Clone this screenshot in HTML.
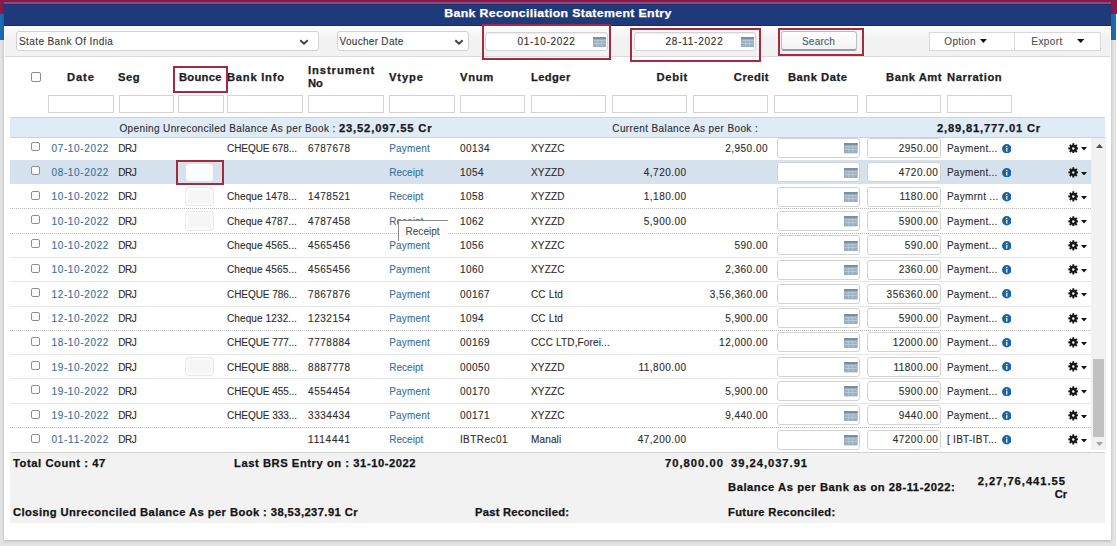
<!DOCTYPE html>
<html><head><meta charset="utf-8"><style>
html,body{margin:0;padding:0;width:1117px;height:546px;overflow:hidden;background:#e4e4e4;}
body{position:relative;font-family:"Liberation Sans", sans-serif;}
div,svg{position:absolute;}
.t{white-space:nowrap;}
</style></head><body>
<div style="left:0.00px;top:0.00px;width:1117.00px;height:2.20px;background:#861848"></div>
<div style="left:0.00px;top:0.00px;width:5.00px;height:14.00px;background:#8a1a48"></div>
<div style="left:1110.00px;top:0.00px;width:7.00px;height:14.00px;background:#8a1a48"></div>
<div style="left:0.00px;top:14.00px;width:4.00px;height:26.00px;background:#1b6cb0"></div>
<div style="left:1110.00px;top:14.00px;width:6.00px;height:26.00px;background:#1b6cb0"></div>
<div style="left:1116.00px;top:14.00px;width:1.00px;height:532.00px;background:#ffffff"></div>
<div style="left:4.00px;top:3.50px;width:1107.00px;height:536.50px;background:#fff;box-shadow:0 1px 3px rgba(0,0,0,0.22)"></div>
<div style="left:4.00px;top:2.20px;width:1107.00px;height:1.60px;background:#8c4a82"></div>
<div style="left:4.00px;top:3.80px;width:1107.00px;height:22.20px;background:#1f3a7a;border-bottom:1px solid #1a2c5a;border-top:1px solid #2a2f66;box-sizing:border-box"></div>
<div class="t" style="left:258.17px;width:600px;text-align:center;top:7.69px;font-size:11px;line-height:11px;font-weight:bold;-webkit-text-stroke:0.25px #fff;color:#fff;letter-spacing:0.298px;transform:scaleX(1.12);transform-origin:50% 0;">Bank Reconciliation Statement Entry</div>
<div style="left:5.00px;top:26.00px;width:1105.00px;height:30.00px;background:linear-gradient(#fdfdfd,#f2f2f2 40%,#f2f2f2)"></div>
<div style="left:5.00px;top:56.00px;width:1105.00px;height:1.00px;background:#d9d9d9"></div>
<div style="left:16.00px;top:31.00px;width:303.00px;height:20.00px;background:#fff;border:1px solid #d3d3d3;border-radius:3px;box-sizing:border-box"></div>
<div class="t" style="left:19.00px;top:37.14px;font-size:10px;line-height:10px;-webkit-text-stroke:0.12px #3a3a3a;color:#3a3a3a;letter-spacing:0.399px;">State Bank Of India</div>
<svg style="position:absolute;left:299px;top:39.4px" width="10" height="6.5" viewBox="0 0 10 6.5"><path d="M1.3 1.2 L5 4.7 L8.7 1.2" stroke="#404040" stroke-width="1.9" fill="none"/></svg>
<div style="left:336.50px;top:31.00px;width:132.00px;height:20.00px;background:#fff;border:1px solid #d3d3d3;border-radius:3px;box-sizing:border-box"></div>
<div class="t" style="left:339.50px;top:37.14px;font-size:10px;line-height:10px;-webkit-text-stroke:0.12px #3a3a3a;color:#3a3a3a;letter-spacing:0.299px;">Voucher Date</div>
<svg style="position:absolute;left:454px;top:39.4px" width="10" height="6.5" viewBox="0 0 10 6.5"><path d="M1.3 1.2 L5 4.7 L8.7 1.2" stroke="#404040" stroke-width="1.9" fill="none"/></svg>
<div style="left:485.00px;top:31.50px;width:123.00px;height:19.50px;background:#fff;border:1px solid #d4d4d4;border-radius:3px;box-sizing:border-box;box-shadow:inset 0 1px 1px rgba(0,0,0,0.07)"></div>
<div class="t" style="left:517.50px;top:36.53px;font-size:10px;line-height:10px;-webkit-text-stroke:0.12px #2e2e2e;color:#2e2e2e;letter-spacing:0.672px;">01-10-2022</div>
<svg style="position:absolute;left:592.50px;top:36.80px" width="13.5" height="10.2" viewBox="0 0 14 11" preserveAspectRatio="none"><rect x="0" y="0" width="14" height="11" fill="#9cafc1"/><rect x="0" y="0" width="14" height="2.2" fill="#7a8ea2"/><rect x="1" y="3.6" width="12" height="0.8" fill="#c4d0dc"/><rect x="1" y="6.5" width="12" height="0.8" fill="#c4d0dc"/><rect x="4.6" y="3" width="0.8" height="7" fill="#bfccd8"/><rect x="8.6" y="3" width="0.8" height="7" fill="#bfccd8"/></svg>
<div style="left:633.50px;top:31.50px;width:122.50px;height:19.50px;background:#fff;border:1px solid #d4d4d4;border-radius:3px;box-sizing:border-box;box-shadow:inset 0 1px 1px rgba(0,0,0,0.07)"></div>
<div class="t" style="left:665.50px;top:36.53px;font-size:10px;line-height:10px;-webkit-text-stroke:0.12px #2e2e2e;color:#2e2e2e;letter-spacing:0.753px;">28-11-2022</div>
<svg style="position:absolute;left:740.50px;top:36.80px" width="13.5" height="10.2" viewBox="0 0 14 11" preserveAspectRatio="none"><rect x="0" y="0" width="14" height="11" fill="#9cafc1"/><rect x="0" y="0" width="14" height="2.2" fill="#7a8ea2"/><rect x="1" y="3.6" width="12" height="0.8" fill="#c4d0dc"/><rect x="1" y="6.5" width="12" height="0.8" fill="#c4d0dc"/><rect x="4.6" y="3" width="0.8" height="7" fill="#bfccd8"/><rect x="8.6" y="3" width="0.8" height="7" fill="#bfccd8"/></svg>
<div style="left:482.20px;top:24.20px;width:129.30px;height:35.60px;border:2px solid #a52a40;box-sizing:border-box"></div>
<div style="left:630.30px;top:27.80px;width:130.70px;height:34.70px;border:2px solid #a52a40;box-sizing:border-box"></div>
<div style="left:781.00px;top:31.40px;width:76.00px;height:19.60px;background:linear-gradient(#fff,#f3f3f3);border:1px solid #bdbdbd;border-bottom:2px solid #9c9c9c;border-radius:3px;box-sizing:border-box"></div>
<div class="t" style="left:802.00px;top:36.94px;font-size:10px;line-height:10px;-webkit-text-stroke:0.12px #4d5d6b;color:#4d5d6b;letter-spacing:0.202px;">Search</div>
<div style="left:778.00px;top:27.80px;width:85.50px;height:28.70px;border:2px solid #a52a40;box-sizing:border-box"></div>
<div style="left:928.50px;top:31.50px;width:172.00px;height:19.30px;background:#fff;border:1px solid #d9d9d9;box-sizing:border-box"></div>
<div style="left:1014.20px;top:31.50px;width:1.00px;height:19.30px;background:#d9d9d9"></div>
<div class="t" style="left:944.30px;top:37.14px;font-size:10px;line-height:10px;-webkit-text-stroke:0.12px #505050;color:#505050;letter-spacing:0.366px;">Option</div>
<div class="t" style="left:1031.30px;top:37.14px;font-size:10px;line-height:10px;-webkit-text-stroke:0.12px #505050;color:#505050;letter-spacing:0.439px;">Export</div>
<svg style="position:absolute;left:980.20px;top:38.80px" width="6.8" height="4" viewBox="0 0 6.8 4"><path d="M0 0 L6.8 0 L3.4 4 Z" fill="#111"/></svg>
<svg style="position:absolute;left:1077.30px;top:38.80px" width="7.4" height="4" viewBox="0 0 7.4 4"><path d="M0 0 L7.4 0 L3.7 4 Z" fill="#111"/></svg>
<div style="left:31.00px;top:71.50px;width:10.00px;height:10.00px;border:1px solid #8c8c8c;border-radius:2px;box-sizing:border-box;background:#fff"></div>
<div class="t" style="left:66.90px;top:72.73px;font-size:10px;line-height:10px;font-weight:bold;-webkit-text-stroke:0.25px #1e1e1e;color:#1e1e1e;letter-spacing:0.805px;transform:scaleX(1.12);transform-origin:0 0;">Date</div>
<div class="t" style="left:118.30px;top:72.73px;font-size:10px;line-height:10px;font-weight:bold;-webkit-text-stroke:0.25px #1e1e1e;color:#1e1e1e;letter-spacing:0.514px;transform:scaleX(1.12);transform-origin:0 0;">Seg</div>
<div class="t" style="left:178.50px;top:72.73px;font-size:10px;line-height:10px;font-weight:bold;-webkit-text-stroke:0.25px #1e1e1e;color:#1e1e1e;letter-spacing:0.254px;transform:scaleX(1.12);transform-origin:0 0;">Bounce</div>
<div class="t" style="left:227.10px;top:72.73px;font-size:10px;line-height:10px;font-weight:bold;-webkit-text-stroke:0.25px #1e1e1e;color:#1e1e1e;letter-spacing:0.666px;transform:scaleX(1.12);transform-origin:0 0;">Bank Info</div>
<div class="t" style="left:308.10px;top:65.63px;font-size:10px;line-height:10px;font-weight:bold;-webkit-text-stroke:0.25px #1e1e1e;color:#1e1e1e;letter-spacing:0.826px;transform:scaleX(1.12);transform-origin:0 0;">Instrument</div>
<div class="t" style="left:308.10px;top:79.03px;font-size:10px;line-height:10px;font-weight:bold;-webkit-text-stroke:0.25px #1e1e1e;color:#1e1e1e;letter-spacing:-0.044px;transform:scaleX(1.12);transform-origin:0 0;">No</div>
<div class="t" style="left:388.90px;top:72.73px;font-size:10px;line-height:10px;font-weight:bold;-webkit-text-stroke:0.25px #1e1e1e;color:#1e1e1e;letter-spacing:0.802px;transform:scaleX(1.12);transform-origin:0 0;">Vtype</div>
<div class="t" style="left:459.90px;top:72.73px;font-size:10px;line-height:10px;font-weight:bold;-webkit-text-stroke:0.25px #1e1e1e;color:#1e1e1e;letter-spacing:0.649px;transform:scaleX(1.12);transform-origin:0 0;">Vnum</div>
<div class="t" style="left:531.00px;top:72.73px;font-size:10px;line-height:10px;font-weight:bold;-webkit-text-stroke:0.25px #1e1e1e;color:#1e1e1e;letter-spacing:0.348px;transform:scaleX(1.12);transform-origin:0 0;">Ledger</div>
<div class="t" style="left:87.98px;width:600px;text-align:right;top:72.73px;font-size:10px;line-height:10px;font-weight:bold;-webkit-text-stroke:0.25px #1e1e1e;color:#1e1e1e;letter-spacing:0.646px;transform:scaleX(1.12);transform-origin:100% 0;">Debit</div>
<div class="t" style="left:169.24px;width:600px;text-align:right;top:72.73px;font-size:10px;line-height:10px;font-weight:bold;-webkit-text-stroke:0.25px #1e1e1e;color:#1e1e1e;letter-spacing:0.414px;transform:scaleX(1.12);transform-origin:100% 0;">Credit</div>
<div class="t" style="left:787.50px;top:72.73px;font-size:10px;line-height:10px;font-weight:bold;-webkit-text-stroke:0.25px #1e1e1e;color:#1e1e1e;letter-spacing:0.460px;transform:scaleX(1.12);transform-origin:0 0;">Bank Date</div>
<div class="t" style="left:342.00px;width:600px;text-align:right;top:72.73px;font-size:10px;line-height:10px;font-weight:bold;-webkit-text-stroke:0.25px #1e1e1e;color:#1e1e1e;letter-spacing:0.450px;transform:scaleX(1.12);transform-origin:100% 0;">Bank Amt</div>
<div class="t" style="left:947.00px;top:72.73px;font-size:10px;line-height:10px;font-weight:bold;-webkit-text-stroke:0.25px #1e1e1e;color:#1e1e1e;letter-spacing:0.548px;transform:scaleX(1.12);transform-origin:0 0;">Narration</div>
<div style="left:173.30px;top:66.00px;width:55.20px;height:26.70px;border:2px solid #a52a40;box-sizing:border-box"></div>
<div style="left:47.70px;top:95.10px;width:66.10px;height:17.80px;border:1px solid #d3d3d3;box-sizing:border-box;background:#fff"></div>
<div style="left:118.80px;top:95.10px;width:55.50px;height:17.80px;border:1px solid #d3d3d3;box-sizing:border-box;background:#fff"></div>
<div style="left:178.20px;top:95.10px;width:45.80px;height:17.80px;border:1px solid #d3d3d3;box-sizing:border-box;background:#fff"></div>
<div style="left:227.00px;top:95.10px;width:75.50px;height:17.80px;border:1px solid #d3d3d3;box-sizing:border-box;background:#fff"></div>
<div style="left:308.00px;top:95.10px;width:75.70px;height:17.80px;border:1px solid #d3d3d3;box-sizing:border-box;background:#fff"></div>
<div style="left:389.40px;top:95.10px;width:65.30px;height:17.80px;border:1px solid #d3d3d3;box-sizing:border-box;background:#fff"></div>
<div style="left:460.40px;top:95.10px;width:65.10px;height:17.80px;border:1px solid #d3d3d3;box-sizing:border-box;background:#fff"></div>
<div style="left:531.00px;top:95.10px;width:75.00px;height:17.80px;border:1px solid #d3d3d3;box-sizing:border-box;background:#fff"></div>
<div style="left:612.00px;top:95.10px;width:74.60px;height:17.80px;border:1px solid #d3d3d3;box-sizing:border-box;background:#fff"></div>
<div style="left:693.00px;top:95.10px;width:74.60px;height:17.80px;border:1px solid #d3d3d3;box-sizing:border-box;background:#fff"></div>
<div style="left:773.90px;top:95.10px;width:84.50px;height:17.80px;border:1px solid #d3d3d3;box-sizing:border-box;background:#fff"></div>
<div style="left:866.30px;top:95.10px;width:74.50px;height:17.80px;border:1px solid #d3d3d3;box-sizing:border-box;background:#fff"></div>
<div style="left:946.80px;top:95.10px;width:65.70px;height:17.80px;border:1px solid #d3d3d3;box-sizing:border-box;background:#fff"></div>
<div style="left:10px;top:137.4px;width:1096px;height:315px;overflow:hidden">
<div style="left:20.80px;top:4.70px;width:9.00px;height:9.00px;border:1px solid #8e8e8e;border-radius:2px;box-sizing:border-box;background:#fff"></div>
<div class="t" style="left:41.50px;top:6.33px;font-size:10px;line-height:10px;-webkit-text-stroke:0.12px #3a70a0;color:#3a70a0;letter-spacing:0.638px;">07-10-2022</div>
<div class="t" style="left:108.30px;top:6.33px;font-size:10px;line-height:10px;-webkit-text-stroke:0.12px #2d2d2d;color:#2d2d2d;letter-spacing:-0.477px;">DRJ</div>
<div class="t" style="left:217.00px;top:6.33px;font-size:10px;line-height:10px;-webkit-text-stroke:0.12px #2d2d2d;color:#2d2d2d;letter-spacing:-0.049px;">CHEQUE 678...</div>
<div class="t" style="left:298.10px;top:6.33px;font-size:10px;line-height:10px;-webkit-text-stroke:0.12px #2d2d2d;color:#2d2d2d;letter-spacing:0.510px;">6787678</div>
<div class="t" style="left:379.20px;top:6.33px;font-size:10px;line-height:10px;-webkit-text-stroke:0.12px #3a70a0;color:#3a70a0;letter-spacing:0.205px;">Payment</div>
<div class="t" style="left:449.90px;top:6.33px;font-size:10px;line-height:10px;-webkit-text-stroke:0.12px #2d2d2d;color:#2d2d2d;letter-spacing:0.450px;">00134</div>
<div class="t" style="left:521.00px;top:6.33px;font-size:10px;line-height:10px;-webkit-text-stroke:0.12px #2d2d2d;color:#2d2d2d;letter-spacing:0.150px;">XYZZC</div>
<div class="t" style="left:158.10px;width:600px;text-align:right;top:6.33px;font-size:10px;line-height:10px;-webkit-text-stroke:0.12px #2d2d2d;color:#2d2d2d;letter-spacing:0.500px;">2,950.00</div>
<div style="left:766.60px;top:0.60px;width:83.00px;height:20.00px;background:#fff;border:1px solid #d2d2d2;border-radius:3px;box-sizing:border-box"></div>
<svg style="position:absolute;left:834.00px;top:6.00px" width="13.7" height="10.4" viewBox="0 0 14 11" preserveAspectRatio="none"><rect x="0" y="0" width="14" height="11" fill="#9cafc1"/><rect x="0" y="0" width="14" height="2.2" fill="#7a8ea2"/><rect x="1" y="3.6" width="12" height="0.8" fill="#c4d0dc"/><rect x="1" y="6.5" width="12" height="0.8" fill="#c4d0dc"/><rect x="4.6" y="3" width="0.8" height="7" fill="#bfccd8"/><rect x="8.6" y="3" width="0.8" height="7" fill="#bfccd8"/></svg>
<div style="left:856.50px;top:0.60px;width:74.00px;height:20.00px;background:#fff;border:1px solid #d2d2d2;border-radius:3px;box-sizing:border-box"></div>
<div class="t" style="left:328.40px;width:600px;text-align:right;top:6.33px;font-size:10px;line-height:10px;-webkit-text-stroke:0.12px #2d2d2d;color:#2d2d2d;letter-spacing:0.500px;">2950.00</div>
<div class="t" style="left:936.90px;top:6.33px;font-size:10px;line-height:10px;-webkit-text-stroke:0.12px #2d2d2d;color:#2d2d2d;letter-spacing:0.300px;">Payment...</div>
<svg style="position:absolute;left:991.60px;top:6.15px" width="9.5" height="9.5" viewBox="0 0 10 10"><circle cx="5" cy="5" r="5" fill="#1d63a6"/><rect x="4.3" y="4.1" width="1.4" height="3.9" fill="#e8f0f8"/><circle cx="5" cy="2.7" r="0.85" fill="#e8f0f8"/></svg>
<svg style="position:absolute;left:1057.80px;top:5.20px" width="10.6" height="10.8" viewBox="0 0 24 24" preserveAspectRatio="none"><path fill="#141414" fill-rule="evenodd" d="M9.66 4.35 L10.00 0.67 L14.00 0.67 L14.34 4.35 L15.76 4.94 L18.60 2.58 L21.42 5.40 L19.06 8.24 L19.65 9.66 L23.33 10.00 L23.33 14.00 L19.65 14.34 L19.06 15.76 L21.42 18.60 L18.60 21.42 L15.76 19.06 L14.34 19.65 L14.00 23.33 L10.00 23.33 L9.66 19.65 L8.24 19.06 L5.40 21.42 L2.58 18.60 L4.94 15.76 L4.35 14.34 L0.67 14.00 L0.67 10.00 L4.35 9.66 L4.94 8.24 L2.58 5.40 L5.40 2.58 L8.24 4.94Z M12 9.2 A2.8 2.8 0 1 0 12 14.8 A2.8 2.8 0 1 0 12 9.2Z"/></svg>
<svg style="position:absolute;left:1071.10px;top:10.00px" width="6" height="3.6" viewBox="0 0 6 3.6"><path d="M0 0H6L3 3.6Z" fill="#141414"/></svg>
<div style="left:0.00px;top:22.51px;width:1081.00px;height:24.31px;background:#d5e2ee"></div>
<div style="left:20.80px;top:29.01px;width:9.00px;height:9.00px;border:1px solid #8e8e8e;border-radius:2px;box-sizing:border-box;background:#fff"></div>
<div class="t" style="left:41.50px;top:30.64px;font-size:10px;line-height:10px;-webkit-text-stroke:0.12px #3a70a0;color:#3a70a0;letter-spacing:0.638px;">08-10-2022</div>
<div class="t" style="left:108.30px;top:30.64px;font-size:10px;line-height:10px;-webkit-text-stroke:0.12px #2d2d2d;color:#2d2d2d;letter-spacing:-0.477px;">DRJ</div>
<div style="left:174.70px;top:25.81px;width:29.00px;height:19.30px;background:#fbfdff;border:1px solid #d9e1e8;border-radius:4px;box-sizing:border-box"></div>
<div class="t" style="left:379.20px;top:30.64px;font-size:10px;line-height:10px;-webkit-text-stroke:0.12px #3a70a0;color:#3a70a0;letter-spacing:0.032px;">Receipt</div>
<div class="t" style="left:449.90px;top:30.64px;font-size:10px;line-height:10px;-webkit-text-stroke:0.12px #2d2d2d;color:#2d2d2d;letter-spacing:0.450px;">1054</div>
<div class="t" style="left:521.00px;top:30.64px;font-size:10px;line-height:10px;-webkit-text-stroke:0.12px #2d2d2d;color:#2d2d2d;letter-spacing:0.150px;">XYZZD</div>
<div class="t" style="left:76.70px;width:600px;text-align:right;top:30.64px;font-size:10px;line-height:10px;-webkit-text-stroke:0.12px #2d2d2d;color:#2d2d2d;letter-spacing:0.500px;">4,720.00</div>
<div style="left:766.60px;top:24.91px;width:83.00px;height:20.00px;background:#fff;border:1px solid #d2d2d2;border-radius:3px;box-sizing:border-box"></div>
<svg style="position:absolute;left:834.00px;top:30.31px" width="13.7" height="10.4" viewBox="0 0 14 11" preserveAspectRatio="none"><rect x="0" y="0" width="14" height="11" fill="#9cafc1"/><rect x="0" y="0" width="14" height="2.2" fill="#7a8ea2"/><rect x="1" y="3.6" width="12" height="0.8" fill="#c4d0dc"/><rect x="1" y="6.5" width="12" height="0.8" fill="#c4d0dc"/><rect x="4.6" y="3" width="0.8" height="7" fill="#bfccd8"/><rect x="8.6" y="3" width="0.8" height="7" fill="#bfccd8"/></svg>
<div style="left:856.50px;top:24.91px;width:74.00px;height:20.00px;background:#fff;border:1px solid #d2d2d2;border-radius:3px;box-sizing:border-box"></div>
<div class="t" style="left:328.40px;width:600px;text-align:right;top:30.64px;font-size:10px;line-height:10px;-webkit-text-stroke:0.12px #2d2d2d;color:#2d2d2d;letter-spacing:0.500px;">4720.00</div>
<div class="t" style="left:936.90px;top:30.64px;font-size:10px;line-height:10px;-webkit-text-stroke:0.12px #2d2d2d;color:#2d2d2d;letter-spacing:0.300px;">Payment...</div>
<svg style="position:absolute;left:991.60px;top:30.46px" width="9.5" height="9.5" viewBox="0 0 10 10"><circle cx="5" cy="5" r="5" fill="#1d63a6"/><rect x="4.3" y="4.1" width="1.4" height="3.9" fill="#e8f0f8"/><circle cx="5" cy="2.7" r="0.85" fill="#e8f0f8"/></svg>
<svg style="position:absolute;left:1057.80px;top:29.51px" width="10.6" height="10.8" viewBox="0 0 24 24" preserveAspectRatio="none"><path fill="#141414" fill-rule="evenodd" d="M9.66 4.35 L10.00 0.67 L14.00 0.67 L14.34 4.35 L15.76 4.94 L18.60 2.58 L21.42 5.40 L19.06 8.24 L19.65 9.66 L23.33 10.00 L23.33 14.00 L19.65 14.34 L19.06 15.76 L21.42 18.60 L18.60 21.42 L15.76 19.06 L14.34 19.65 L14.00 23.33 L10.00 23.33 L9.66 19.65 L8.24 19.06 L5.40 21.42 L2.58 18.60 L4.94 15.76 L4.35 14.34 L0.67 14.00 L0.67 10.00 L4.35 9.66 L4.94 8.24 L2.58 5.40 L5.40 2.58 L8.24 4.94Z M12 9.2 A2.8 2.8 0 1 0 12 14.8 A2.8 2.8 0 1 0 12 9.2Z"/></svg>
<svg style="position:absolute;left:1071.10px;top:34.31px" width="6" height="3.6" viewBox="0 0 6 3.6"><path d="M0 0H6L3 3.6Z" fill="#141414"/></svg>
<div style="left:0.00px;top:70.93px;width:1081.00px;height:1.00px;border-top:1px dotted #b9b9b9;box-sizing:border-box"></div>
<div style="left:20.80px;top:53.32px;width:9.00px;height:9.00px;border:1px solid #8e8e8e;border-radius:2px;box-sizing:border-box;background:#fff"></div>
<div class="t" style="left:41.50px;top:54.95px;font-size:10px;line-height:10px;-webkit-text-stroke:0.12px #3a70a0;color:#3a70a0;letter-spacing:0.638px;">10-10-2022</div>
<div class="t" style="left:108.30px;top:54.95px;font-size:10px;line-height:10px;-webkit-text-stroke:0.12px #2d2d2d;color:#2d2d2d;letter-spacing:-0.477px;">DRJ</div>
<div style="left:174.50px;top:49.72px;width:29.30px;height:19.10px;background:#f6f6f6;border:1px solid #e9e9e9;border-radius:4px;box-sizing:border-box;box-shadow:inset 0 0 0 2px #fbfbfb"></div>
<div class="t" style="left:217.00px;top:54.95px;font-size:10px;line-height:10px;-webkit-text-stroke:0.12px #2d2d2d;color:#2d2d2d;letter-spacing:0.116px;">Cheque 1478...</div>
<div class="t" style="left:298.10px;top:54.95px;font-size:10px;line-height:10px;-webkit-text-stroke:0.12px #2d2d2d;color:#2d2d2d;letter-spacing:0.510px;">1478521</div>
<div class="t" style="left:379.20px;top:54.95px;font-size:10px;line-height:10px;-webkit-text-stroke:0.12px #3a70a0;color:#3a70a0;letter-spacing:0.032px;">Receipt</div>
<div class="t" style="left:449.90px;top:54.95px;font-size:10px;line-height:10px;-webkit-text-stroke:0.12px #2d2d2d;color:#2d2d2d;letter-spacing:0.450px;">1058</div>
<div class="t" style="left:521.00px;top:54.95px;font-size:10px;line-height:10px;-webkit-text-stroke:0.12px #2d2d2d;color:#2d2d2d;letter-spacing:0.150px;">XYZZD</div>
<div class="t" style="left:76.70px;width:600px;text-align:right;top:54.95px;font-size:10px;line-height:10px;-webkit-text-stroke:0.12px #2d2d2d;color:#2d2d2d;letter-spacing:0.500px;">1,180.00</div>
<div style="left:766.60px;top:49.22px;width:83.00px;height:20.00px;background:#fff;border:1px solid #d2d2d2;border-radius:3px;box-sizing:border-box"></div>
<svg style="position:absolute;left:834.00px;top:54.62px" width="13.7" height="10.4" viewBox="0 0 14 11" preserveAspectRatio="none"><rect x="0" y="0" width="14" height="11" fill="#9cafc1"/><rect x="0" y="0" width="14" height="2.2" fill="#7a8ea2"/><rect x="1" y="3.6" width="12" height="0.8" fill="#c4d0dc"/><rect x="1" y="6.5" width="12" height="0.8" fill="#c4d0dc"/><rect x="4.6" y="3" width="0.8" height="7" fill="#bfccd8"/><rect x="8.6" y="3" width="0.8" height="7" fill="#bfccd8"/></svg>
<div style="left:856.50px;top:49.22px;width:74.00px;height:20.00px;background:#fff;border:1px solid #d2d2d2;border-radius:3px;box-sizing:border-box"></div>
<div class="t" style="left:328.40px;width:600px;text-align:right;top:54.95px;font-size:10px;line-height:10px;-webkit-text-stroke:0.12px #2d2d2d;color:#2d2d2d;letter-spacing:0.500px;">1180.00</div>
<div class="t" style="left:936.90px;top:54.95px;font-size:10px;line-height:10px;-webkit-text-stroke:0.12px #2d2d2d;color:#2d2d2d;letter-spacing:0.300px;">Paymrnt ...</div>
<svg style="position:absolute;left:991.60px;top:54.77px" width="9.5" height="9.5" viewBox="0 0 10 10"><circle cx="5" cy="5" r="5" fill="#1d63a6"/><rect x="4.3" y="4.1" width="1.4" height="3.9" fill="#e8f0f8"/><circle cx="5" cy="2.7" r="0.85" fill="#e8f0f8"/></svg>
<svg style="position:absolute;left:1057.80px;top:53.82px" width="10.6" height="10.8" viewBox="0 0 24 24" preserveAspectRatio="none"><path fill="#141414" fill-rule="evenodd" d="M9.66 4.35 L10.00 0.67 L14.00 0.67 L14.34 4.35 L15.76 4.94 L18.60 2.58 L21.42 5.40 L19.06 8.24 L19.65 9.66 L23.33 10.00 L23.33 14.00 L19.65 14.34 L19.06 15.76 L21.42 18.60 L18.60 21.42 L15.76 19.06 L14.34 19.65 L14.00 23.33 L10.00 23.33 L9.66 19.65 L8.24 19.06 L5.40 21.42 L2.58 18.60 L4.94 15.76 L4.35 14.34 L0.67 14.00 L0.67 10.00 L4.35 9.66 L4.94 8.24 L2.58 5.40 L5.40 2.58 L8.24 4.94Z M12 9.2 A2.8 2.8 0 1 0 12 14.8 A2.8 2.8 0 1 0 12 9.2Z"/></svg>
<svg style="position:absolute;left:1071.10px;top:58.62px" width="6" height="3.6" viewBox="0 0 6 3.6"><path d="M0 0H6L3 3.6Z" fill="#141414"/></svg>
<div style="left:0.00px;top:95.24px;width:1081.00px;height:1.00px;border-top:1px dotted #b9b9b9;box-sizing:border-box"></div>
<div style="left:20.80px;top:77.63px;width:9.00px;height:9.00px;border:1px solid #8e8e8e;border-radius:2px;box-sizing:border-box;background:#fff"></div>
<div class="t" style="left:41.50px;top:79.26px;font-size:10px;line-height:10px;-webkit-text-stroke:0.12px #3a70a0;color:#3a70a0;letter-spacing:0.638px;">10-10-2022</div>
<div class="t" style="left:108.30px;top:79.26px;font-size:10px;line-height:10px;-webkit-text-stroke:0.12px #2d2d2d;color:#2d2d2d;letter-spacing:-0.477px;">DRJ</div>
<div style="left:174.50px;top:74.03px;width:29.30px;height:19.10px;background:#f6f6f6;border:1px solid #e9e9e9;border-radius:4px;box-sizing:border-box;box-shadow:inset 0 0 0 2px #fbfbfb"></div>
<div class="t" style="left:217.00px;top:79.26px;font-size:10px;line-height:10px;-webkit-text-stroke:0.12px #2d2d2d;color:#2d2d2d;letter-spacing:0.116px;">Cheque 4787...</div>
<div class="t" style="left:298.10px;top:79.26px;font-size:10px;line-height:10px;-webkit-text-stroke:0.12px #2d2d2d;color:#2d2d2d;letter-spacing:0.510px;">4787458</div>
<div class="t" style="left:379.20px;top:79.26px;font-size:10px;line-height:10px;-webkit-text-stroke:0.12px #3a70a0;color:#3a70a0;letter-spacing:0.032px;">Receipt</div>
<div class="t" style="left:449.90px;top:79.26px;font-size:10px;line-height:10px;-webkit-text-stroke:0.12px #2d2d2d;color:#2d2d2d;letter-spacing:0.450px;">1062</div>
<div class="t" style="left:521.00px;top:79.26px;font-size:10px;line-height:10px;-webkit-text-stroke:0.12px #2d2d2d;color:#2d2d2d;letter-spacing:0.150px;">XYZZD</div>
<div class="t" style="left:76.70px;width:600px;text-align:right;top:79.26px;font-size:10px;line-height:10px;-webkit-text-stroke:0.12px #2d2d2d;color:#2d2d2d;letter-spacing:0.500px;">5,900.00</div>
<div style="left:766.60px;top:73.53px;width:83.00px;height:20.00px;background:#fff;border:1px solid #d2d2d2;border-radius:3px;box-sizing:border-box"></div>
<svg style="position:absolute;left:834.00px;top:78.93px" width="13.7" height="10.4" viewBox="0 0 14 11" preserveAspectRatio="none"><rect x="0" y="0" width="14" height="11" fill="#9cafc1"/><rect x="0" y="0" width="14" height="2.2" fill="#7a8ea2"/><rect x="1" y="3.6" width="12" height="0.8" fill="#c4d0dc"/><rect x="1" y="6.5" width="12" height="0.8" fill="#c4d0dc"/><rect x="4.6" y="3" width="0.8" height="7" fill="#bfccd8"/><rect x="8.6" y="3" width="0.8" height="7" fill="#bfccd8"/></svg>
<div style="left:856.50px;top:73.53px;width:74.00px;height:20.00px;background:#fff;border:1px solid #d2d2d2;border-radius:3px;box-sizing:border-box"></div>
<div class="t" style="left:328.40px;width:600px;text-align:right;top:79.26px;font-size:10px;line-height:10px;-webkit-text-stroke:0.12px #2d2d2d;color:#2d2d2d;letter-spacing:0.500px;">5900.00</div>
<div class="t" style="left:936.90px;top:79.26px;font-size:10px;line-height:10px;-webkit-text-stroke:0.12px #2d2d2d;color:#2d2d2d;letter-spacing:0.300px;">Payment...</div>
<svg style="position:absolute;left:991.60px;top:79.08px" width="9.5" height="9.5" viewBox="0 0 10 10"><circle cx="5" cy="5" r="5" fill="#1d63a6"/><rect x="4.3" y="4.1" width="1.4" height="3.9" fill="#e8f0f8"/><circle cx="5" cy="2.7" r="0.85" fill="#e8f0f8"/></svg>
<svg style="position:absolute;left:1057.80px;top:78.13px" width="10.6" height="10.8" viewBox="0 0 24 24" preserveAspectRatio="none"><path fill="#141414" fill-rule="evenodd" d="M9.66 4.35 L10.00 0.67 L14.00 0.67 L14.34 4.35 L15.76 4.94 L18.60 2.58 L21.42 5.40 L19.06 8.24 L19.65 9.66 L23.33 10.00 L23.33 14.00 L19.65 14.34 L19.06 15.76 L21.42 18.60 L18.60 21.42 L15.76 19.06 L14.34 19.65 L14.00 23.33 L10.00 23.33 L9.66 19.65 L8.24 19.06 L5.40 21.42 L2.58 18.60 L4.94 15.76 L4.35 14.34 L0.67 14.00 L0.67 10.00 L4.35 9.66 L4.94 8.24 L2.58 5.40 L5.40 2.58 L8.24 4.94Z M12 9.2 A2.8 2.8 0 1 0 12 14.8 A2.8 2.8 0 1 0 12 9.2Z"/></svg>
<svg style="position:absolute;left:1071.10px;top:82.93px" width="6" height="3.6" viewBox="0 0 6 3.6"><path d="M0 0H6L3 3.6Z" fill="#141414"/></svg>
<div style="left:0.00px;top:119.55px;width:1081.00px;height:1.00px;background:#e6e6e6"></div>
<div style="left:20.80px;top:101.94px;width:9.00px;height:9.00px;border:1px solid #8e8e8e;border-radius:2px;box-sizing:border-box;background:#fff"></div>
<div class="t" style="left:41.50px;top:103.57px;font-size:10px;line-height:10px;-webkit-text-stroke:0.12px #3a70a0;color:#3a70a0;letter-spacing:0.638px;">10-10-2022</div>
<div class="t" style="left:108.30px;top:103.57px;font-size:10px;line-height:10px;-webkit-text-stroke:0.12px #2d2d2d;color:#2d2d2d;letter-spacing:-0.477px;">DRJ</div>
<div class="t" style="left:217.00px;top:103.57px;font-size:10px;line-height:10px;-webkit-text-stroke:0.12px #2d2d2d;color:#2d2d2d;letter-spacing:0.116px;">Cheque 4565...</div>
<div class="t" style="left:298.10px;top:103.57px;font-size:10px;line-height:10px;-webkit-text-stroke:0.12px #2d2d2d;color:#2d2d2d;letter-spacing:0.510px;">4565456</div>
<div class="t" style="left:379.20px;top:103.57px;font-size:10px;line-height:10px;-webkit-text-stroke:0.12px #3a70a0;color:#3a70a0;letter-spacing:0.205px;">Payment</div>
<div class="t" style="left:449.90px;top:103.57px;font-size:10px;line-height:10px;-webkit-text-stroke:0.12px #2d2d2d;color:#2d2d2d;letter-spacing:0.450px;">1056</div>
<div class="t" style="left:521.00px;top:103.57px;font-size:10px;line-height:10px;-webkit-text-stroke:0.12px #2d2d2d;color:#2d2d2d;letter-spacing:0.150px;">XYZZC</div>
<div class="t" style="left:158.10px;width:600px;text-align:right;top:103.57px;font-size:10px;line-height:10px;-webkit-text-stroke:0.12px #2d2d2d;color:#2d2d2d;letter-spacing:0.500px;">590.00</div>
<div style="left:766.60px;top:97.84px;width:83.00px;height:20.00px;background:#fff;border:1px solid #d2d2d2;border-radius:3px;box-sizing:border-box"></div>
<svg style="position:absolute;left:834.00px;top:103.24px" width="13.7" height="10.4" viewBox="0 0 14 11" preserveAspectRatio="none"><rect x="0" y="0" width="14" height="11" fill="#9cafc1"/><rect x="0" y="0" width="14" height="2.2" fill="#7a8ea2"/><rect x="1" y="3.6" width="12" height="0.8" fill="#c4d0dc"/><rect x="1" y="6.5" width="12" height="0.8" fill="#c4d0dc"/><rect x="4.6" y="3" width="0.8" height="7" fill="#bfccd8"/><rect x="8.6" y="3" width="0.8" height="7" fill="#bfccd8"/></svg>
<div style="left:856.50px;top:97.84px;width:74.00px;height:20.00px;background:#fff;border:1px solid #d2d2d2;border-radius:3px;box-sizing:border-box"></div>
<div class="t" style="left:328.40px;width:600px;text-align:right;top:103.57px;font-size:10px;line-height:10px;-webkit-text-stroke:0.12px #2d2d2d;color:#2d2d2d;letter-spacing:0.500px;">590.00</div>
<div class="t" style="left:936.90px;top:103.57px;font-size:10px;line-height:10px;-webkit-text-stroke:0.12px #2d2d2d;color:#2d2d2d;letter-spacing:0.300px;">Payment...</div>
<svg style="position:absolute;left:991.60px;top:103.39px" width="9.5" height="9.5" viewBox="0 0 10 10"><circle cx="5" cy="5" r="5" fill="#1d63a6"/><rect x="4.3" y="4.1" width="1.4" height="3.9" fill="#e8f0f8"/><circle cx="5" cy="2.7" r="0.85" fill="#e8f0f8"/></svg>
<svg style="position:absolute;left:1057.80px;top:102.44px" width="10.6" height="10.8" viewBox="0 0 24 24" preserveAspectRatio="none"><path fill="#141414" fill-rule="evenodd" d="M9.66 4.35 L10.00 0.67 L14.00 0.67 L14.34 4.35 L15.76 4.94 L18.60 2.58 L21.42 5.40 L19.06 8.24 L19.65 9.66 L23.33 10.00 L23.33 14.00 L19.65 14.34 L19.06 15.76 L21.42 18.60 L18.60 21.42 L15.76 19.06 L14.34 19.65 L14.00 23.33 L10.00 23.33 L9.66 19.65 L8.24 19.06 L5.40 21.42 L2.58 18.60 L4.94 15.76 L4.35 14.34 L0.67 14.00 L0.67 10.00 L4.35 9.66 L4.94 8.24 L2.58 5.40 L5.40 2.58 L8.24 4.94Z M12 9.2 A2.8 2.8 0 1 0 12 14.8 A2.8 2.8 0 1 0 12 9.2Z"/></svg>
<svg style="position:absolute;left:1071.10px;top:107.24px" width="6" height="3.6" viewBox="0 0 6 3.6"><path d="M0 0H6L3 3.6Z" fill="#141414"/></svg>
<div style="left:0.00px;top:143.86px;width:1081.00px;height:1.00px;background:#e6e6e6"></div>
<div style="left:20.80px;top:126.25px;width:9.00px;height:9.00px;border:1px solid #8e8e8e;border-radius:2px;box-sizing:border-box;background:#fff"></div>
<div class="t" style="left:41.50px;top:127.89px;font-size:10px;line-height:10px;-webkit-text-stroke:0.12px #3a70a0;color:#3a70a0;letter-spacing:0.638px;">10-10-2022</div>
<div class="t" style="left:108.30px;top:127.89px;font-size:10px;line-height:10px;-webkit-text-stroke:0.12px #2d2d2d;color:#2d2d2d;letter-spacing:-0.477px;">DRJ</div>
<div class="t" style="left:217.00px;top:127.89px;font-size:10px;line-height:10px;-webkit-text-stroke:0.12px #2d2d2d;color:#2d2d2d;letter-spacing:0.116px;">Cheque 4565...</div>
<div class="t" style="left:298.10px;top:127.89px;font-size:10px;line-height:10px;-webkit-text-stroke:0.12px #2d2d2d;color:#2d2d2d;letter-spacing:0.510px;">4565456</div>
<div class="t" style="left:379.20px;top:127.89px;font-size:10px;line-height:10px;-webkit-text-stroke:0.12px #3a70a0;color:#3a70a0;letter-spacing:0.205px;">Payment</div>
<div class="t" style="left:449.90px;top:127.89px;font-size:10px;line-height:10px;-webkit-text-stroke:0.12px #2d2d2d;color:#2d2d2d;letter-spacing:0.450px;">1060</div>
<div class="t" style="left:521.00px;top:127.89px;font-size:10px;line-height:10px;-webkit-text-stroke:0.12px #2d2d2d;color:#2d2d2d;letter-spacing:0.150px;">XYZZC</div>
<div class="t" style="left:158.10px;width:600px;text-align:right;top:127.89px;font-size:10px;line-height:10px;-webkit-text-stroke:0.12px #2d2d2d;color:#2d2d2d;letter-spacing:0.500px;">2,360.00</div>
<div style="left:766.60px;top:122.15px;width:83.00px;height:20.00px;background:#fff;border:1px solid #d2d2d2;border-radius:3px;box-sizing:border-box"></div>
<svg style="position:absolute;left:834.00px;top:127.55px" width="13.7" height="10.4" viewBox="0 0 14 11" preserveAspectRatio="none"><rect x="0" y="0" width="14" height="11" fill="#9cafc1"/><rect x="0" y="0" width="14" height="2.2" fill="#7a8ea2"/><rect x="1" y="3.6" width="12" height="0.8" fill="#c4d0dc"/><rect x="1" y="6.5" width="12" height="0.8" fill="#c4d0dc"/><rect x="4.6" y="3" width="0.8" height="7" fill="#bfccd8"/><rect x="8.6" y="3" width="0.8" height="7" fill="#bfccd8"/></svg>
<div style="left:856.50px;top:122.15px;width:74.00px;height:20.00px;background:#fff;border:1px solid #d2d2d2;border-radius:3px;box-sizing:border-box"></div>
<div class="t" style="left:328.40px;width:600px;text-align:right;top:127.89px;font-size:10px;line-height:10px;-webkit-text-stroke:0.12px #2d2d2d;color:#2d2d2d;letter-spacing:0.500px;">2360.00</div>
<div class="t" style="left:936.90px;top:127.89px;font-size:10px;line-height:10px;-webkit-text-stroke:0.12px #2d2d2d;color:#2d2d2d;letter-spacing:0.300px;">Payment...</div>
<svg style="position:absolute;left:991.60px;top:127.70px" width="9.5" height="9.5" viewBox="0 0 10 10"><circle cx="5" cy="5" r="5" fill="#1d63a6"/><rect x="4.3" y="4.1" width="1.4" height="3.9" fill="#e8f0f8"/><circle cx="5" cy="2.7" r="0.85" fill="#e8f0f8"/></svg>
<svg style="position:absolute;left:1057.80px;top:126.75px" width="10.6" height="10.8" viewBox="0 0 24 24" preserveAspectRatio="none"><path fill="#141414" fill-rule="evenodd" d="M9.66 4.35 L10.00 0.67 L14.00 0.67 L14.34 4.35 L15.76 4.94 L18.60 2.58 L21.42 5.40 L19.06 8.24 L19.65 9.66 L23.33 10.00 L23.33 14.00 L19.65 14.34 L19.06 15.76 L21.42 18.60 L18.60 21.42 L15.76 19.06 L14.34 19.65 L14.00 23.33 L10.00 23.33 L9.66 19.65 L8.24 19.06 L5.40 21.42 L2.58 18.60 L4.94 15.76 L4.35 14.34 L0.67 14.00 L0.67 10.00 L4.35 9.66 L4.94 8.24 L2.58 5.40 L5.40 2.58 L8.24 4.94Z M12 9.2 A2.8 2.8 0 1 0 12 14.8 A2.8 2.8 0 1 0 12 9.2Z"/></svg>
<svg style="position:absolute;left:1071.10px;top:131.55px" width="6" height="3.6" viewBox="0 0 6 3.6"><path d="M0 0H6L3 3.6Z" fill="#141414"/></svg>
<div style="left:0.00px;top:168.17px;width:1081.00px;height:1.00px;background:#e6e6e6"></div>
<div style="left:20.80px;top:150.56px;width:9.00px;height:9.00px;border:1px solid #8e8e8e;border-radius:2px;box-sizing:border-box;background:#fff"></div>
<div class="t" style="left:41.50px;top:152.20px;font-size:10px;line-height:10px;-webkit-text-stroke:0.12px #3a70a0;color:#3a70a0;letter-spacing:0.638px;">12-10-2022</div>
<div class="t" style="left:108.30px;top:152.20px;font-size:10px;line-height:10px;-webkit-text-stroke:0.12px #2d2d2d;color:#2d2d2d;letter-spacing:-0.477px;">DRJ</div>
<div class="t" style="left:217.00px;top:152.20px;font-size:10px;line-height:10px;-webkit-text-stroke:0.12px #2d2d2d;color:#2d2d2d;letter-spacing:-0.049px;">CHEQUE 786...</div>
<div class="t" style="left:298.10px;top:152.20px;font-size:10px;line-height:10px;-webkit-text-stroke:0.12px #2d2d2d;color:#2d2d2d;letter-spacing:0.510px;">7867876</div>
<div class="t" style="left:379.20px;top:152.20px;font-size:10px;line-height:10px;-webkit-text-stroke:0.12px #3a70a0;color:#3a70a0;letter-spacing:0.205px;">Payment</div>
<div class="t" style="left:449.90px;top:152.20px;font-size:10px;line-height:10px;-webkit-text-stroke:0.12px #2d2d2d;color:#2d2d2d;letter-spacing:0.450px;">00167</div>
<div class="t" style="left:521.00px;top:152.20px;font-size:10px;line-height:10px;-webkit-text-stroke:0.12px #2d2d2d;color:#2d2d2d;letter-spacing:0.150px;">CC Ltd</div>
<div class="t" style="left:158.10px;width:600px;text-align:right;top:152.20px;font-size:10px;line-height:10px;-webkit-text-stroke:0.12px #2d2d2d;color:#2d2d2d;letter-spacing:0.500px;">3,56,360.00</div>
<div style="left:766.60px;top:146.46px;width:83.00px;height:20.00px;background:#fff;border:1px solid #d2d2d2;border-radius:3px;box-sizing:border-box"></div>
<svg style="position:absolute;left:834.00px;top:151.86px" width="13.7" height="10.4" viewBox="0 0 14 11" preserveAspectRatio="none"><rect x="0" y="0" width="14" height="11" fill="#9cafc1"/><rect x="0" y="0" width="14" height="2.2" fill="#7a8ea2"/><rect x="1" y="3.6" width="12" height="0.8" fill="#c4d0dc"/><rect x="1" y="6.5" width="12" height="0.8" fill="#c4d0dc"/><rect x="4.6" y="3" width="0.8" height="7" fill="#bfccd8"/><rect x="8.6" y="3" width="0.8" height="7" fill="#bfccd8"/></svg>
<div style="left:856.50px;top:146.46px;width:74.00px;height:20.00px;background:#fff;border:1px solid #d2d2d2;border-radius:3px;box-sizing:border-box"></div>
<div class="t" style="left:328.40px;width:600px;text-align:right;top:152.20px;font-size:10px;line-height:10px;-webkit-text-stroke:0.12px #2d2d2d;color:#2d2d2d;letter-spacing:0.500px;">356360.00</div>
<div class="t" style="left:936.90px;top:152.20px;font-size:10px;line-height:10px;-webkit-text-stroke:0.12px #2d2d2d;color:#2d2d2d;letter-spacing:0.300px;">Payment...</div>
<svg style="position:absolute;left:991.60px;top:152.01px" width="9.5" height="9.5" viewBox="0 0 10 10"><circle cx="5" cy="5" r="5" fill="#1d63a6"/><rect x="4.3" y="4.1" width="1.4" height="3.9" fill="#e8f0f8"/><circle cx="5" cy="2.7" r="0.85" fill="#e8f0f8"/></svg>
<svg style="position:absolute;left:1057.80px;top:151.06px" width="10.6" height="10.8" viewBox="0 0 24 24" preserveAspectRatio="none"><path fill="#141414" fill-rule="evenodd" d="M9.66 4.35 L10.00 0.67 L14.00 0.67 L14.34 4.35 L15.76 4.94 L18.60 2.58 L21.42 5.40 L19.06 8.24 L19.65 9.66 L23.33 10.00 L23.33 14.00 L19.65 14.34 L19.06 15.76 L21.42 18.60 L18.60 21.42 L15.76 19.06 L14.34 19.65 L14.00 23.33 L10.00 23.33 L9.66 19.65 L8.24 19.06 L5.40 21.42 L2.58 18.60 L4.94 15.76 L4.35 14.34 L0.67 14.00 L0.67 10.00 L4.35 9.66 L4.94 8.24 L2.58 5.40 L5.40 2.58 L8.24 4.94Z M12 9.2 A2.8 2.8 0 1 0 12 14.8 A2.8 2.8 0 1 0 12 9.2Z"/></svg>
<svg style="position:absolute;left:1071.10px;top:155.86px" width="6" height="3.6" viewBox="0 0 6 3.6"><path d="M0 0H6L3 3.6Z" fill="#141414"/></svg>
<div style="left:0.00px;top:192.48px;width:1081.00px;height:1.00px;border-top:1px dotted #b9b9b9;box-sizing:border-box"></div>
<div style="left:20.80px;top:174.87px;width:9.00px;height:9.00px;border:1px solid #8e8e8e;border-radius:2px;box-sizing:border-box;background:#fff"></div>
<div class="t" style="left:41.50px;top:176.51px;font-size:10px;line-height:10px;-webkit-text-stroke:0.12px #3a70a0;color:#3a70a0;letter-spacing:0.638px;">12-10-2022</div>
<div class="t" style="left:108.30px;top:176.51px;font-size:10px;line-height:10px;-webkit-text-stroke:0.12px #2d2d2d;color:#2d2d2d;letter-spacing:-0.477px;">DRJ</div>
<div class="t" style="left:217.00px;top:176.51px;font-size:10px;line-height:10px;-webkit-text-stroke:0.12px #2d2d2d;color:#2d2d2d;letter-spacing:0.116px;">Cheque 1232...</div>
<div class="t" style="left:298.10px;top:176.51px;font-size:10px;line-height:10px;-webkit-text-stroke:0.12px #2d2d2d;color:#2d2d2d;letter-spacing:0.510px;">1232154</div>
<div class="t" style="left:379.20px;top:176.51px;font-size:10px;line-height:10px;-webkit-text-stroke:0.12px #3a70a0;color:#3a70a0;letter-spacing:0.205px;">Payment</div>
<div class="t" style="left:449.90px;top:176.51px;font-size:10px;line-height:10px;-webkit-text-stroke:0.12px #2d2d2d;color:#2d2d2d;letter-spacing:0.450px;">1094</div>
<div class="t" style="left:521.00px;top:176.51px;font-size:10px;line-height:10px;-webkit-text-stroke:0.12px #2d2d2d;color:#2d2d2d;letter-spacing:0.150px;">CC Ltd</div>
<div class="t" style="left:158.10px;width:600px;text-align:right;top:176.51px;font-size:10px;line-height:10px;-webkit-text-stroke:0.12px #2d2d2d;color:#2d2d2d;letter-spacing:0.500px;">5,900.00</div>
<div style="left:766.60px;top:170.77px;width:83.00px;height:20.00px;background:#fff;border:1px solid #d2d2d2;border-radius:3px;box-sizing:border-box"></div>
<svg style="position:absolute;left:834.00px;top:176.17px" width="13.7" height="10.4" viewBox="0 0 14 11" preserveAspectRatio="none"><rect x="0" y="0" width="14" height="11" fill="#9cafc1"/><rect x="0" y="0" width="14" height="2.2" fill="#7a8ea2"/><rect x="1" y="3.6" width="12" height="0.8" fill="#c4d0dc"/><rect x="1" y="6.5" width="12" height="0.8" fill="#c4d0dc"/><rect x="4.6" y="3" width="0.8" height="7" fill="#bfccd8"/><rect x="8.6" y="3" width="0.8" height="7" fill="#bfccd8"/></svg>
<div style="left:856.50px;top:170.77px;width:74.00px;height:20.00px;background:#fff;border:1px solid #d2d2d2;border-radius:3px;box-sizing:border-box"></div>
<div class="t" style="left:328.40px;width:600px;text-align:right;top:176.51px;font-size:10px;line-height:10px;-webkit-text-stroke:0.12px #2d2d2d;color:#2d2d2d;letter-spacing:0.500px;">5900.00</div>
<div class="t" style="left:936.90px;top:176.51px;font-size:10px;line-height:10px;-webkit-text-stroke:0.12px #2d2d2d;color:#2d2d2d;letter-spacing:0.300px;">Payment...</div>
<svg style="position:absolute;left:991.60px;top:176.32px" width="9.5" height="9.5" viewBox="0 0 10 10"><circle cx="5" cy="5" r="5" fill="#1d63a6"/><rect x="4.3" y="4.1" width="1.4" height="3.9" fill="#e8f0f8"/><circle cx="5" cy="2.7" r="0.85" fill="#e8f0f8"/></svg>
<svg style="position:absolute;left:1057.80px;top:175.37px" width="10.6" height="10.8" viewBox="0 0 24 24" preserveAspectRatio="none"><path fill="#141414" fill-rule="evenodd" d="M9.66 4.35 L10.00 0.67 L14.00 0.67 L14.34 4.35 L15.76 4.94 L18.60 2.58 L21.42 5.40 L19.06 8.24 L19.65 9.66 L23.33 10.00 L23.33 14.00 L19.65 14.34 L19.06 15.76 L21.42 18.60 L18.60 21.42 L15.76 19.06 L14.34 19.65 L14.00 23.33 L10.00 23.33 L9.66 19.65 L8.24 19.06 L5.40 21.42 L2.58 18.60 L4.94 15.76 L4.35 14.34 L0.67 14.00 L0.67 10.00 L4.35 9.66 L4.94 8.24 L2.58 5.40 L5.40 2.58 L8.24 4.94Z M12 9.2 A2.8 2.8 0 1 0 12 14.8 A2.8 2.8 0 1 0 12 9.2Z"/></svg>
<svg style="position:absolute;left:1071.10px;top:180.17px" width="6" height="3.6" viewBox="0 0 6 3.6"><path d="M0 0H6L3 3.6Z" fill="#141414"/></svg>
<div style="left:0.00px;top:216.79px;width:1081.00px;height:1.00px;background:#e6e6e6"></div>
<div style="left:20.80px;top:199.18px;width:9.00px;height:9.00px;border:1px solid #8e8e8e;border-radius:2px;box-sizing:border-box;background:#fff"></div>
<div class="t" style="left:41.50px;top:200.82px;font-size:10px;line-height:10px;-webkit-text-stroke:0.12px #3a70a0;color:#3a70a0;letter-spacing:0.638px;">18-10-2022</div>
<div class="t" style="left:108.30px;top:200.82px;font-size:10px;line-height:10px;-webkit-text-stroke:0.12px #2d2d2d;color:#2d2d2d;letter-spacing:-0.477px;">DRJ</div>
<div class="t" style="left:217.00px;top:200.82px;font-size:10px;line-height:10px;-webkit-text-stroke:0.12px #2d2d2d;color:#2d2d2d;letter-spacing:-0.049px;">CHEQUE 777...</div>
<div class="t" style="left:298.10px;top:200.82px;font-size:10px;line-height:10px;-webkit-text-stroke:0.12px #2d2d2d;color:#2d2d2d;letter-spacing:0.510px;">7778884</div>
<div class="t" style="left:379.20px;top:200.82px;font-size:10px;line-height:10px;-webkit-text-stroke:0.12px #3a70a0;color:#3a70a0;letter-spacing:0.205px;">Payment</div>
<div class="t" style="left:449.90px;top:200.82px;font-size:10px;line-height:10px;-webkit-text-stroke:0.12px #2d2d2d;color:#2d2d2d;letter-spacing:0.450px;">00169</div>
<div class="t" style="left:521.00px;top:200.82px;font-size:10px;line-height:10px;-webkit-text-stroke:0.12px #2d2d2d;color:#2d2d2d;letter-spacing:0.150px;">CCC LTD,Forei...</div>
<div class="t" style="left:158.10px;width:600px;text-align:right;top:200.82px;font-size:10px;line-height:10px;-webkit-text-stroke:0.12px #2d2d2d;color:#2d2d2d;letter-spacing:0.500px;">12,000.00</div>
<div style="left:766.60px;top:195.08px;width:83.00px;height:20.00px;background:#fff;border:1px solid #d2d2d2;border-radius:3px;box-sizing:border-box"></div>
<svg style="position:absolute;left:834.00px;top:200.48px" width="13.7" height="10.4" viewBox="0 0 14 11" preserveAspectRatio="none"><rect x="0" y="0" width="14" height="11" fill="#9cafc1"/><rect x="0" y="0" width="14" height="2.2" fill="#7a8ea2"/><rect x="1" y="3.6" width="12" height="0.8" fill="#c4d0dc"/><rect x="1" y="6.5" width="12" height="0.8" fill="#c4d0dc"/><rect x="4.6" y="3" width="0.8" height="7" fill="#bfccd8"/><rect x="8.6" y="3" width="0.8" height="7" fill="#bfccd8"/></svg>
<div style="left:856.50px;top:195.08px;width:74.00px;height:20.00px;background:#fff;border:1px solid #d2d2d2;border-radius:3px;box-sizing:border-box"></div>
<div class="t" style="left:328.40px;width:600px;text-align:right;top:200.82px;font-size:10px;line-height:10px;-webkit-text-stroke:0.12px #2d2d2d;color:#2d2d2d;letter-spacing:0.500px;">12000.00</div>
<div class="t" style="left:936.90px;top:200.82px;font-size:10px;line-height:10px;-webkit-text-stroke:0.12px #2d2d2d;color:#2d2d2d;letter-spacing:0.300px;">Payment...</div>
<svg style="position:absolute;left:991.60px;top:200.63px" width="9.5" height="9.5" viewBox="0 0 10 10"><circle cx="5" cy="5" r="5" fill="#1d63a6"/><rect x="4.3" y="4.1" width="1.4" height="3.9" fill="#e8f0f8"/><circle cx="5" cy="2.7" r="0.85" fill="#e8f0f8"/></svg>
<svg style="position:absolute;left:1057.80px;top:199.68px" width="10.6" height="10.8" viewBox="0 0 24 24" preserveAspectRatio="none"><path fill="#141414" fill-rule="evenodd" d="M9.66 4.35 L10.00 0.67 L14.00 0.67 L14.34 4.35 L15.76 4.94 L18.60 2.58 L21.42 5.40 L19.06 8.24 L19.65 9.66 L23.33 10.00 L23.33 14.00 L19.65 14.34 L19.06 15.76 L21.42 18.60 L18.60 21.42 L15.76 19.06 L14.34 19.65 L14.00 23.33 L10.00 23.33 L9.66 19.65 L8.24 19.06 L5.40 21.42 L2.58 18.60 L4.94 15.76 L4.35 14.34 L0.67 14.00 L0.67 10.00 L4.35 9.66 L4.94 8.24 L2.58 5.40 L5.40 2.58 L8.24 4.94Z M12 9.2 A2.8 2.8 0 1 0 12 14.8 A2.8 2.8 0 1 0 12 9.2Z"/></svg>
<svg style="position:absolute;left:1071.10px;top:204.48px" width="6" height="3.6" viewBox="0 0 6 3.6"><path d="M0 0H6L3 3.6Z" fill="#141414"/></svg>
<div style="left:0.00px;top:241.10px;width:1081.00px;height:1.00px;background:#e6e6e6"></div>
<div style="left:20.80px;top:223.49px;width:9.00px;height:9.00px;border:1px solid #8e8e8e;border-radius:2px;box-sizing:border-box;background:#fff"></div>
<div class="t" style="left:41.50px;top:225.13px;font-size:10px;line-height:10px;-webkit-text-stroke:0.12px #3a70a0;color:#3a70a0;letter-spacing:0.638px;">19-10-2022</div>
<div class="t" style="left:108.30px;top:225.13px;font-size:10px;line-height:10px;-webkit-text-stroke:0.12px #2d2d2d;color:#2d2d2d;letter-spacing:-0.477px;">DRJ</div>
<div style="left:174.50px;top:219.89px;width:29.30px;height:19.10px;background:#f6f6f6;border:1px solid #e9e9e9;border-radius:4px;box-sizing:border-box;box-shadow:inset 0 0 0 2px #fbfbfb"></div>
<div class="t" style="left:217.00px;top:225.13px;font-size:10px;line-height:10px;-webkit-text-stroke:0.12px #2d2d2d;color:#2d2d2d;letter-spacing:-0.049px;">CHEQUE 888...</div>
<div class="t" style="left:298.10px;top:225.13px;font-size:10px;line-height:10px;-webkit-text-stroke:0.12px #2d2d2d;color:#2d2d2d;letter-spacing:0.510px;">8887778</div>
<div class="t" style="left:379.20px;top:225.13px;font-size:10px;line-height:10px;-webkit-text-stroke:0.12px #3a70a0;color:#3a70a0;letter-spacing:0.032px;">Receipt</div>
<div class="t" style="left:449.90px;top:225.13px;font-size:10px;line-height:10px;-webkit-text-stroke:0.12px #2d2d2d;color:#2d2d2d;letter-spacing:0.450px;">00050</div>
<div class="t" style="left:521.00px;top:225.13px;font-size:10px;line-height:10px;-webkit-text-stroke:0.12px #2d2d2d;color:#2d2d2d;letter-spacing:0.150px;">XYZZD</div>
<div class="t" style="left:76.70px;width:600px;text-align:right;top:225.13px;font-size:10px;line-height:10px;-webkit-text-stroke:0.12px #2d2d2d;color:#2d2d2d;letter-spacing:0.500px;">11,800.00</div>
<div style="left:766.60px;top:219.39px;width:83.00px;height:20.00px;background:#fff;border:1px solid #d2d2d2;border-radius:3px;box-sizing:border-box"></div>
<svg style="position:absolute;left:834.00px;top:224.79px" width="13.7" height="10.4" viewBox="0 0 14 11" preserveAspectRatio="none"><rect x="0" y="0" width="14" height="11" fill="#9cafc1"/><rect x="0" y="0" width="14" height="2.2" fill="#7a8ea2"/><rect x="1" y="3.6" width="12" height="0.8" fill="#c4d0dc"/><rect x="1" y="6.5" width="12" height="0.8" fill="#c4d0dc"/><rect x="4.6" y="3" width="0.8" height="7" fill="#bfccd8"/><rect x="8.6" y="3" width="0.8" height="7" fill="#bfccd8"/></svg>
<div style="left:856.50px;top:219.39px;width:74.00px;height:20.00px;background:#fff;border:1px solid #d2d2d2;border-radius:3px;box-sizing:border-box"></div>
<div class="t" style="left:328.40px;width:600px;text-align:right;top:225.13px;font-size:10px;line-height:10px;-webkit-text-stroke:0.12px #2d2d2d;color:#2d2d2d;letter-spacing:0.500px;">11800.00</div>
<div class="t" style="left:936.90px;top:225.13px;font-size:10px;line-height:10px;-webkit-text-stroke:0.12px #2d2d2d;color:#2d2d2d;letter-spacing:0.300px;">Payment...</div>
<svg style="position:absolute;left:991.60px;top:224.94px" width="9.5" height="9.5" viewBox="0 0 10 10"><circle cx="5" cy="5" r="5" fill="#1d63a6"/><rect x="4.3" y="4.1" width="1.4" height="3.9" fill="#e8f0f8"/><circle cx="5" cy="2.7" r="0.85" fill="#e8f0f8"/></svg>
<svg style="position:absolute;left:1057.80px;top:223.99px" width="10.6" height="10.8" viewBox="0 0 24 24" preserveAspectRatio="none"><path fill="#141414" fill-rule="evenodd" d="M9.66 4.35 L10.00 0.67 L14.00 0.67 L14.34 4.35 L15.76 4.94 L18.60 2.58 L21.42 5.40 L19.06 8.24 L19.65 9.66 L23.33 10.00 L23.33 14.00 L19.65 14.34 L19.06 15.76 L21.42 18.60 L18.60 21.42 L15.76 19.06 L14.34 19.65 L14.00 23.33 L10.00 23.33 L9.66 19.65 L8.24 19.06 L5.40 21.42 L2.58 18.60 L4.94 15.76 L4.35 14.34 L0.67 14.00 L0.67 10.00 L4.35 9.66 L4.94 8.24 L2.58 5.40 L5.40 2.58 L8.24 4.94Z M12 9.2 A2.8 2.8 0 1 0 12 14.8 A2.8 2.8 0 1 0 12 9.2Z"/></svg>
<svg style="position:absolute;left:1071.10px;top:228.79px" width="6" height="3.6" viewBox="0 0 6 3.6"><path d="M0 0H6L3 3.6Z" fill="#141414"/></svg>
<div style="left:0.00px;top:265.41px;width:1081.00px;height:1.00px;background:#e6e6e6"></div>
<div style="left:20.80px;top:247.80px;width:9.00px;height:9.00px;border:1px solid #8e8e8e;border-radius:2px;box-sizing:border-box;background:#fff"></div>
<div class="t" style="left:41.50px;top:249.44px;font-size:10px;line-height:10px;-webkit-text-stroke:0.12px #3a70a0;color:#3a70a0;letter-spacing:0.638px;">19-10-2022</div>
<div class="t" style="left:108.30px;top:249.44px;font-size:10px;line-height:10px;-webkit-text-stroke:0.12px #2d2d2d;color:#2d2d2d;letter-spacing:-0.477px;">DRJ</div>
<div class="t" style="left:217.00px;top:249.44px;font-size:10px;line-height:10px;-webkit-text-stroke:0.12px #2d2d2d;color:#2d2d2d;letter-spacing:-0.049px;">CHEQUE 455...</div>
<div class="t" style="left:298.10px;top:249.44px;font-size:10px;line-height:10px;-webkit-text-stroke:0.12px #2d2d2d;color:#2d2d2d;letter-spacing:0.510px;">4554454</div>
<div class="t" style="left:379.20px;top:249.44px;font-size:10px;line-height:10px;-webkit-text-stroke:0.12px #3a70a0;color:#3a70a0;letter-spacing:0.205px;">Payment</div>
<div class="t" style="left:449.90px;top:249.44px;font-size:10px;line-height:10px;-webkit-text-stroke:0.12px #2d2d2d;color:#2d2d2d;letter-spacing:0.450px;">00170</div>
<div class="t" style="left:521.00px;top:249.44px;font-size:10px;line-height:10px;-webkit-text-stroke:0.12px #2d2d2d;color:#2d2d2d;letter-spacing:0.150px;">XYZZC</div>
<div class="t" style="left:158.10px;width:600px;text-align:right;top:249.44px;font-size:10px;line-height:10px;-webkit-text-stroke:0.12px #2d2d2d;color:#2d2d2d;letter-spacing:0.500px;">5,900.00</div>
<div style="left:766.60px;top:243.70px;width:83.00px;height:20.00px;background:#fff;border:1px solid #d2d2d2;border-radius:3px;box-sizing:border-box"></div>
<svg style="position:absolute;left:834.00px;top:249.10px" width="13.7" height="10.4" viewBox="0 0 14 11" preserveAspectRatio="none"><rect x="0" y="0" width="14" height="11" fill="#9cafc1"/><rect x="0" y="0" width="14" height="2.2" fill="#7a8ea2"/><rect x="1" y="3.6" width="12" height="0.8" fill="#c4d0dc"/><rect x="1" y="6.5" width="12" height="0.8" fill="#c4d0dc"/><rect x="4.6" y="3" width="0.8" height="7" fill="#bfccd8"/><rect x="8.6" y="3" width="0.8" height="7" fill="#bfccd8"/></svg>
<div style="left:856.50px;top:243.70px;width:74.00px;height:20.00px;background:#fff;border:1px solid #d2d2d2;border-radius:3px;box-sizing:border-box"></div>
<div class="t" style="left:328.40px;width:600px;text-align:right;top:249.44px;font-size:10px;line-height:10px;-webkit-text-stroke:0.12px #2d2d2d;color:#2d2d2d;letter-spacing:0.500px;">5900.00</div>
<div class="t" style="left:936.90px;top:249.44px;font-size:10px;line-height:10px;-webkit-text-stroke:0.12px #2d2d2d;color:#2d2d2d;letter-spacing:0.300px;">Payment...</div>
<svg style="position:absolute;left:991.60px;top:249.25px" width="9.5" height="9.5" viewBox="0 0 10 10"><circle cx="5" cy="5" r="5" fill="#1d63a6"/><rect x="4.3" y="4.1" width="1.4" height="3.9" fill="#e8f0f8"/><circle cx="5" cy="2.7" r="0.85" fill="#e8f0f8"/></svg>
<svg style="position:absolute;left:1057.80px;top:248.30px" width="10.6" height="10.8" viewBox="0 0 24 24" preserveAspectRatio="none"><path fill="#141414" fill-rule="evenodd" d="M9.66 4.35 L10.00 0.67 L14.00 0.67 L14.34 4.35 L15.76 4.94 L18.60 2.58 L21.42 5.40 L19.06 8.24 L19.65 9.66 L23.33 10.00 L23.33 14.00 L19.65 14.34 L19.06 15.76 L21.42 18.60 L18.60 21.42 L15.76 19.06 L14.34 19.65 L14.00 23.33 L10.00 23.33 L9.66 19.65 L8.24 19.06 L5.40 21.42 L2.58 18.60 L4.94 15.76 L4.35 14.34 L0.67 14.00 L0.67 10.00 L4.35 9.66 L4.94 8.24 L2.58 5.40 L5.40 2.58 L8.24 4.94Z M12 9.2 A2.8 2.8 0 1 0 12 14.8 A2.8 2.8 0 1 0 12 9.2Z"/></svg>
<svg style="position:absolute;left:1071.10px;top:253.10px" width="6" height="3.6" viewBox="0 0 6 3.6"><path d="M0 0H6L3 3.6Z" fill="#141414"/></svg>
<div style="left:0.00px;top:289.72px;width:1081.00px;height:1.00px;border-top:1px dotted #b9b9b9;box-sizing:border-box"></div>
<div style="left:20.80px;top:272.11px;width:9.00px;height:9.00px;border:1px solid #8e8e8e;border-radius:2px;box-sizing:border-box;background:#fff"></div>
<div class="t" style="left:41.50px;top:273.75px;font-size:10px;line-height:10px;-webkit-text-stroke:0.12px #3a70a0;color:#3a70a0;letter-spacing:0.638px;">19-10-2022</div>
<div class="t" style="left:108.30px;top:273.75px;font-size:10px;line-height:10px;-webkit-text-stroke:0.12px #2d2d2d;color:#2d2d2d;letter-spacing:-0.477px;">DRJ</div>
<div class="t" style="left:217.00px;top:273.75px;font-size:10px;line-height:10px;-webkit-text-stroke:0.12px #2d2d2d;color:#2d2d2d;letter-spacing:-0.049px;">CHEQUE 333...</div>
<div class="t" style="left:298.10px;top:273.75px;font-size:10px;line-height:10px;-webkit-text-stroke:0.12px #2d2d2d;color:#2d2d2d;letter-spacing:0.510px;">3334434</div>
<div class="t" style="left:379.20px;top:273.75px;font-size:10px;line-height:10px;-webkit-text-stroke:0.12px #3a70a0;color:#3a70a0;letter-spacing:0.205px;">Payment</div>
<div class="t" style="left:449.90px;top:273.75px;font-size:10px;line-height:10px;-webkit-text-stroke:0.12px #2d2d2d;color:#2d2d2d;letter-spacing:0.450px;">00171</div>
<div class="t" style="left:521.00px;top:273.75px;font-size:10px;line-height:10px;-webkit-text-stroke:0.12px #2d2d2d;color:#2d2d2d;letter-spacing:0.150px;">XYZZC</div>
<div class="t" style="left:158.10px;width:600px;text-align:right;top:273.75px;font-size:10px;line-height:10px;-webkit-text-stroke:0.12px #2d2d2d;color:#2d2d2d;letter-spacing:0.500px;">9,440.00</div>
<div style="left:766.60px;top:268.01px;width:83.00px;height:20.00px;background:#fff;border:1px solid #d2d2d2;border-radius:3px;box-sizing:border-box"></div>
<svg style="position:absolute;left:834.00px;top:273.41px" width="13.7" height="10.4" viewBox="0 0 14 11" preserveAspectRatio="none"><rect x="0" y="0" width="14" height="11" fill="#9cafc1"/><rect x="0" y="0" width="14" height="2.2" fill="#7a8ea2"/><rect x="1" y="3.6" width="12" height="0.8" fill="#c4d0dc"/><rect x="1" y="6.5" width="12" height="0.8" fill="#c4d0dc"/><rect x="4.6" y="3" width="0.8" height="7" fill="#bfccd8"/><rect x="8.6" y="3" width="0.8" height="7" fill="#bfccd8"/></svg>
<div style="left:856.50px;top:268.01px;width:74.00px;height:20.00px;background:#fff;border:1px solid #d2d2d2;border-radius:3px;box-sizing:border-box"></div>
<div class="t" style="left:328.40px;width:600px;text-align:right;top:273.75px;font-size:10px;line-height:10px;-webkit-text-stroke:0.12px #2d2d2d;color:#2d2d2d;letter-spacing:0.500px;">9440.00</div>
<div class="t" style="left:936.90px;top:273.75px;font-size:10px;line-height:10px;-webkit-text-stroke:0.12px #2d2d2d;color:#2d2d2d;letter-spacing:0.300px;">Payment...</div>
<svg style="position:absolute;left:991.60px;top:273.56px" width="9.5" height="9.5" viewBox="0 0 10 10"><circle cx="5" cy="5" r="5" fill="#1d63a6"/><rect x="4.3" y="4.1" width="1.4" height="3.9" fill="#e8f0f8"/><circle cx="5" cy="2.7" r="0.85" fill="#e8f0f8"/></svg>
<svg style="position:absolute;left:1057.80px;top:272.61px" width="10.6" height="10.8" viewBox="0 0 24 24" preserveAspectRatio="none"><path fill="#141414" fill-rule="evenodd" d="M9.66 4.35 L10.00 0.67 L14.00 0.67 L14.34 4.35 L15.76 4.94 L18.60 2.58 L21.42 5.40 L19.06 8.24 L19.65 9.66 L23.33 10.00 L23.33 14.00 L19.65 14.34 L19.06 15.76 L21.42 18.60 L18.60 21.42 L15.76 19.06 L14.34 19.65 L14.00 23.33 L10.00 23.33 L9.66 19.65 L8.24 19.06 L5.40 21.42 L2.58 18.60 L4.94 15.76 L4.35 14.34 L0.67 14.00 L0.67 10.00 L4.35 9.66 L4.94 8.24 L2.58 5.40 L5.40 2.58 L8.24 4.94Z M12 9.2 A2.8 2.8 0 1 0 12 14.8 A2.8 2.8 0 1 0 12 9.2Z"/></svg>
<svg style="position:absolute;left:1071.10px;top:277.41px" width="6" height="3.6" viewBox="0 0 6 3.6"><path d="M0 0H6L3 3.6Z" fill="#141414"/></svg>
<div style="left:20.80px;top:296.42px;width:9.00px;height:9.00px;border:1px solid #8e8e8e;border-radius:2px;box-sizing:border-box;background:#fff"></div>
<div class="t" style="left:41.50px;top:298.05px;font-size:10px;line-height:10px;-webkit-text-stroke:0.12px #3a70a0;color:#3a70a0;letter-spacing:0.720px;">01-11-2022</div>
<div class="t" style="left:108.30px;top:298.05px;font-size:10px;line-height:10px;-webkit-text-stroke:0.12px #2d2d2d;color:#2d2d2d;letter-spacing:-0.477px;">DRJ</div>
<div class="t" style="left:298.10px;top:298.05px;font-size:10px;line-height:10px;-webkit-text-stroke:0.12px #2d2d2d;color:#2d2d2d;letter-spacing:0.758px;">1114441</div>
<div class="t" style="left:379.20px;top:298.05px;font-size:10px;line-height:10px;-webkit-text-stroke:0.12px #3a70a0;color:#3a70a0;letter-spacing:0.032px;">Receipt</div>
<div class="t" style="left:449.90px;top:298.05px;font-size:10px;line-height:10px;-webkit-text-stroke:0.12px #2d2d2d;color:#2d2d2d;letter-spacing:0.450px;">IBTRec01</div>
<div class="t" style="left:521.00px;top:298.05px;font-size:10px;line-height:10px;-webkit-text-stroke:0.12px #2d2d2d;color:#2d2d2d;letter-spacing:0.150px;">Manali</div>
<div class="t" style="left:76.70px;width:600px;text-align:right;top:298.05px;font-size:10px;line-height:10px;-webkit-text-stroke:0.12px #2d2d2d;color:#2d2d2d;letter-spacing:0.500px;">47,200.00</div>
<div style="left:766.60px;top:292.32px;width:83.00px;height:20.00px;background:#fff;border:1px solid #d2d2d2;border-radius:3px;box-sizing:border-box"></div>
<svg style="position:absolute;left:834.00px;top:297.72px" width="13.7" height="10.4" viewBox="0 0 14 11" preserveAspectRatio="none"><rect x="0" y="0" width="14" height="11" fill="#9cafc1"/><rect x="0" y="0" width="14" height="2.2" fill="#7a8ea2"/><rect x="1" y="3.6" width="12" height="0.8" fill="#c4d0dc"/><rect x="1" y="6.5" width="12" height="0.8" fill="#c4d0dc"/><rect x="4.6" y="3" width="0.8" height="7" fill="#bfccd8"/><rect x="8.6" y="3" width="0.8" height="7" fill="#bfccd8"/></svg>
<div style="left:856.50px;top:292.32px;width:74.00px;height:20.00px;background:#fff;border:1px solid #d2d2d2;border-radius:3px;box-sizing:border-box"></div>
<div class="t" style="left:328.40px;width:600px;text-align:right;top:298.05px;font-size:10px;line-height:10px;-webkit-text-stroke:0.12px #2d2d2d;color:#2d2d2d;letter-spacing:0.500px;">47200.00</div>
<div class="t" style="left:936.90px;top:298.05px;font-size:10px;line-height:10px;-webkit-text-stroke:0.12px #2d2d2d;color:#2d2d2d;letter-spacing:0.300px;">[ IBT-IBT...</div>
<svg style="position:absolute;left:991.60px;top:297.87px" width="9.5" height="9.5" viewBox="0 0 10 10"><circle cx="5" cy="5" r="5" fill="#1d63a6"/><rect x="4.3" y="4.1" width="1.4" height="3.9" fill="#e8f0f8"/><circle cx="5" cy="2.7" r="0.85" fill="#e8f0f8"/></svg>
<svg style="position:absolute;left:1057.80px;top:296.92px" width="10.6" height="10.8" viewBox="0 0 24 24" preserveAspectRatio="none"><path fill="#141414" fill-rule="evenodd" d="M9.66 4.35 L10.00 0.67 L14.00 0.67 L14.34 4.35 L15.76 4.94 L18.60 2.58 L21.42 5.40 L19.06 8.24 L19.65 9.66 L23.33 10.00 L23.33 14.00 L19.65 14.34 L19.06 15.76 L21.42 18.60 L18.60 21.42 L15.76 19.06 L14.34 19.65 L14.00 23.33 L10.00 23.33 L9.66 19.65 L8.24 19.06 L5.40 21.42 L2.58 18.60 L4.94 15.76 L4.35 14.34 L0.67 14.00 L0.67 10.00 L4.35 9.66 L4.94 8.24 L2.58 5.40 L5.40 2.58 L8.24 4.94Z M12 9.2 A2.8 2.8 0 1 0 12 14.8 A2.8 2.8 0 1 0 12 9.2Z"/></svg>
<svg style="position:absolute;left:1071.10px;top:301.72px" width="6" height="3.6" viewBox="0 0 6 3.6"><path d="M0 0H6L3 3.6Z" fill="#141414"/></svg>
<div style="left:165.60px;top:22.80px;width:48.00px;height:24.90px;border:2px solid #a52a40;box-sizing:border-box"></div>
<div style="left:388.00px;top:82.40px;width:49.50px;height:21.70px;background:#fff;border-top:1px solid #8a8a8a;border-left:1px solid #8a8a8a;box-sizing:border-box"></div>
<div class="t" style="left:395.50px;top:89.33px;font-size:10px;line-height:10px;-webkit-text-stroke:0.12px #505050;color:#505050;letter-spacing:0.032px;">Receipt</div>
<div style="left:1081.30px;top:0.00px;width:14.70px;height:313.10px;background:#f1f1f1"></div>
<div style="left:1083.00px;top:221.30px;width:11.30px;height:78.30px;background:#c1c1c1"></div>
<svg style="position:absolute;left:1085.70px;top:6.40px" width="7" height="4" viewBox="0 0 7 4"><path d="M0 4H7L3.5 0Z" fill="#505050"/></svg>
<svg style="position:absolute;left:1085.70px;top:304.40px" width="7" height="4" viewBox="0 0 7 4"><path d="M0 0H7L3.5 4Z" fill="#a3a3a3"/></svg>
</div>
<div style="left:10.00px;top:117.00px;width:1095.00px;height:20.60px;background:#dfebf7;border-top:1px solid #c9d4df;border-bottom:1px solid #c6d2dd;box-sizing:border-box"></div>
<div class="t" style="left:119.40px;top:124.03px;font-size:10px;line-height:10px;-webkit-text-stroke:0.12px #2e2e2e;color:#2e2e2e;letter-spacing:0.385px;">Opening Unreconciled Balance As per Book :</div>
<div class="t" style="left:339.00px;top:124.13px;font-size:10px;line-height:10px;font-weight:bold;-webkit-text-stroke:0.25px #1a1a1a;color:#1a1a1a;letter-spacing:0.742px;transform:scaleX(1.12);transform-origin:0 0;">23,52,097.55 Cr</div>
<div class="t" style="left:612.30px;top:124.03px;font-size:10px;line-height:10px;-webkit-text-stroke:0.12px #2e2e2e;color:#2e2e2e;letter-spacing:0.388px;">Current Balance As per Book :</div>
<div class="t" style="left:936.80px;top:124.13px;font-size:10px;line-height:10px;font-weight:bold;-webkit-text-stroke:0.25px #1a1a1a;color:#1a1a1a;letter-spacing:0.720px;transform:scaleX(1.12);transform-origin:0 0;">2,89,81,777.01 Cr</div>
<div style="left:10.00px;top:452.00px;width:1095.00px;height:1.00px;background:#d2d2d2"></div>
<div style="left:10.00px;top:453.00px;width:1095.00px;height:69.50px;background:#f2f2f2"></div>
<div class="t" style="left:13.10px;top:459.44px;font-size:10px;line-height:10px;font-weight:bold;-webkit-text-stroke:0.25px #151515;color:#151515;letter-spacing:0.500px;transform:scaleX(1.12);transform-origin:0 0;">Total Count : 47</div>
<div class="t" style="left:233.90px;top:459.44px;font-size:10px;line-height:10px;font-weight:bold;-webkit-text-stroke:0.25px #151515;color:#151515;letter-spacing:0.493px;transform:scaleX(1.12);transform-origin:0 0;">Last BRS Entry on : 31-10-2022</div>
<div class="t" style="left:123.78px;width:600px;text-align:right;top:459.14px;font-size:10px;line-height:10px;font-weight:bold;-webkit-text-stroke:0.25px #151515;color:#151515;letter-spacing:0.910px;transform:scaleX(1.12);transform-origin:100% 0;">70,800.00</div>
<div class="t" style="left:731.00px;top:459.14px;font-size:10px;line-height:10px;font-weight:bold;-webkit-text-stroke:0.25px #151515;color:#151515;letter-spacing:0.868px;transform:scaleX(1.12);transform-origin:0 0;">39,24,037.91</div>
<div class="t" style="left:728.20px;top:483.44px;font-size:10px;line-height:10px;font-weight:bold;-webkit-text-stroke:0.25px #151515;color:#151515;letter-spacing:0.493px;transform:scaleX(1.12);transform-origin:0 0;">Balance As per Bank as on 28-11-2022:</div>
<div class="t" style="left:466.43px;width:600px;text-align:right;top:477.24px;font-size:10px;line-height:10px;font-weight:bold;-webkit-text-stroke:0.25px #151515;color:#151515;letter-spacing:0.869px;transform:scaleX(1.12);transform-origin:100% 0;">2,27,76,441.55</div>
<div class="t" style="left:467.46px;width:600px;text-align:right;top:489.94px;font-size:10px;line-height:10px;font-weight:bold;-webkit-text-stroke:0.25px #151515;color:#151515;letter-spacing:-0.057px;transform:scaleX(1.12);transform-origin:100% 0;">Cr</div>
<div class="t" style="left:13.10px;top:508.14px;font-size:10px;line-height:10px;font-weight:bold;-webkit-text-stroke:0.25px #151515;color:#151515;letter-spacing:0.373px;transform:scaleX(1.12);transform-origin:0 0;">Closing Unreconciled Balance As per Book : 38,53,237.91 Cr</div>
<div class="t" style="left:474.60px;top:507.83px;font-size:10px;line-height:10px;font-weight:bold;-webkit-text-stroke:0.25px #151515;color:#151515;letter-spacing:0.222px;transform:scaleX(1.12);transform-origin:0 0;">Past Reconciled:</div>
<div class="t" style="left:728.20px;top:507.83px;font-size:10px;line-height:10px;font-weight:bold;-webkit-text-stroke:0.25px #151515;color:#151515;letter-spacing:0.307px;transform:scaleX(1.12);transform-origin:0 0;">Future Reconciled:</div>
</body></html>
